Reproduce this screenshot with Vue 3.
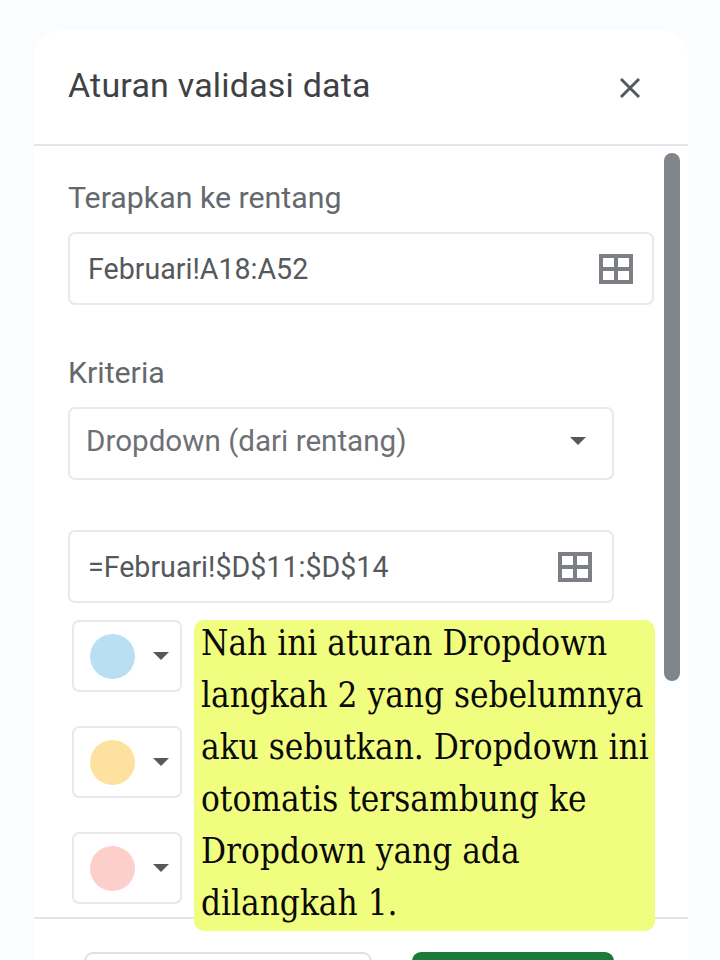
<script setup>
const swatches = ['#b9dff4', '#fde29f', '#fdcfcb']
</script>

<template>
  <div class="page">
    <div class="panel">
      <header class="head">
        <h1>Aturan validasi data</h1>
        <svg class="close" viewBox="0 0 24 24" width="24" height="24"><path d="M3 3 21 21M21 3 3 21" /></svg>
      </header>
      <div class="body">
        <div class="label first">Terapkan ke rentang</div>
        <div class="field wide">
          <span>Februari!A18:A52</span>
          <svg class="grid" viewBox="0 0 34 30" width="34" height="30"><path d="M2 2h30v26H2zM17 2v26M2 15h30" /></svg>
        </div>
        <div class="label second">Kriteria</div>
        <div class="field select">
          <span class="muted">Dropdown (dari rentang)</span>
          <i class="caret big"></i>
        </div>
        <div class="field third">
          <span>=Februari!$D$11:$D$14</span>
          <svg class="grid" viewBox="0 0 34 30" width="34" height="30"><path d="M2 2h30v26H2zM17 2v26M2 15h30" /></svg>
        </div>
        <div class="swatches">
          <div v-for="c in swatches" :key="c" class="swatch">
            <b class="dot" :style="{ background: c }"></b>
            <i class="caret"></i>
          </div>
        </div>
      </div>
      <footer class="foot">
        <div class="btn cancel"></div>
        <div class="btn done"></div>
      </footer>
      <div class="scrollbar"></div>
    </div>
    <div class="note"><p>Nah ini aturan Dropdown langkah 2 yang sebelumnya aku sebutkan. Dropdown ini otomatis tersambung ke Dropdown yang ada<br>dilangkah 1.</p></div>
  </div>
</template>

<style scoped>
.page {
  position: relative;
  box-sizing: border-box;
  width: 720px;
  height: 960px;
  padding: 30px 32px 0 34px;
  overflow: hidden;
  background: #fafcfe;
  font-family: Roboto, "Liberation Sans", sans-serif;
  color: #5f6368;
}
.panel {
  position: relative;
  height: 930px;
  background: #fff;
  border-radius: 28px 28px 0 0;
}
.head {
  box-sizing: border-box;
  height: 116px;
  padding: 0 46px 0 34px;
  display: flex;
  align-items: center;
  justify-content: space-between;
  border-bottom: 2px solid #e4e5e6;
}
h1 {
  margin: 0 0 4px;
  font-size: 34px;
  letter-spacing: 0.2px;
  font-weight: 400;
  color: #3f4245;
}
.close {
  margin-top: 2px;
  fill: none;
  stroke: #55585c;
  stroke-width: 3;
}
.body {
  box-sizing: border-box;
  height: 773px;
  padding: 0 34px;
  border-bottom: 2px solid #e4e5e6;
}
.label {
  font-size: 30.3px;
  line-height: 34px;
  color: #65686c;
}
.first { padding-top: 35px; }
.second { margin-top: 51px; }
.field {
  box-sizing: border-box;
  height: 73px;
  margin-top: 17px;
  display: flex;
  align-items: center;
  justify-content: space-between;
  padding: 0 20px 0 18px;
  border: 2px solid #e8e9ea;
  border-radius: 7px;
  font-size: 28.6px;
  color: #55585c;
}
.wide { width: 586px; margin-top: 17px; padding-right: 19px; }
.select { width: 546px; padding: 0 26px 6px 16px; font-size: 29.6px; }
.third { width: 546px; margin-top: 50px; }
.muted { color: #6d7074; }
.grid {
  fill: none;
  stroke: #7c7f83;
  stroke-width: 4;
}
.caret {
  display: block;
  width: 0;
  height: 0;
  border-left: 8px solid transparent;
  border-right: 8px solid transparent;
  border-top: 8px solid #55585c;
}
.swatches {
  margin: 17px 0 0 4px;
  display: flex;
  flex-direction: column;
  gap: 34px;
}
.swatch {
  box-sizing: border-box;
  width: 110px;
  height: 72px;
  padding-left: 16px;
  display: flex;
  align-items: center;
  gap: 18px;
  border: 2px solid #e8e9ea;
  border-radius: 7px;
}
.dot {
  width: 45px;
  height: 45px;
  border-radius: 50%;
}
.foot {
  height: 80px;
  padding: 33px 0 0 50px;
  display: flex;
  gap: 40px;
}
.btn {
  height: 80px;
  border-radius: 9px;
}
.cancel {
  box-sizing: border-box;
  width: 288px;
  border: 2px solid #e0e1e2;
}
.done {
  width: 202px;
  background: #1a7a3a;
}
.scrollbar {
  position: absolute;
  left: 630px;
  top: 123px;
  width: 16px;
  height: 528px;
  border-radius: 8px;
  background: #7e858b;
}
.note {
  position: absolute;
  left: 194px;
  top: 620px;
  box-sizing: border-box;
  width: 461px;
  height: 311px;
  padding: 0 0 0 7px;
  overflow: hidden;
  background: #f1fd7f;
  border-radius: 10px;
}
.note p {
  margin: -3px 0 0;
  font-family: "DejaVu Serif Condensed", "DejaVu Serif", serif;
  font-stretch: condensed;
  font-size: 34.8px;
  line-height: 52px;
  color: #0a0a0a;
}
</style>
